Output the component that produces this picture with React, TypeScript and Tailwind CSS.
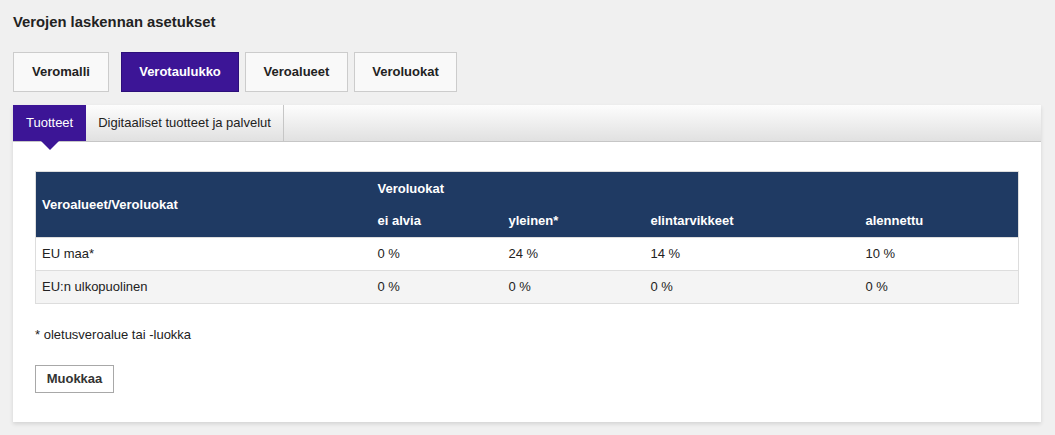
import { useState } from "react";

const mainTabs = [
  { label: "Veromalli", w: "w-[96px]" },
  { label: "Verotaulukko", w: "ml-[6px] w-[118px]" },
  { label: "Veroalueet", w: "w-[103px]" },
  { label: "Veroluokat", w: "w-[103px]" },
];
const subTabs = ["Tuotteet", "Digitaaliset tuotteet ja palvelut"];

const classes = ["ei alvia", "yleinen*", "elintarvikkeet", "alennettu"];

const rows = [
  { area: "EU maa*", rates: ["0 %", "24 %", "14 %", "10 %"] },
  { area: "EU:n ulkopuolinen", rates: ["0 %", "0 %", "0 %", "0 %"] },
];

export default function App() {
  const [mainTab, setMainTab] = useState(1);
  const [subTab, setSubTab] = useState(0);

  return (
    <div className="min-h-[435px] bg-[#f0f0f0] pl-[13px] pr-[14px] pt-[14px] font-['Liberation_Sans',Arial,sans-serif] text-[#222]">
      <h1 className="text-[14.8px] font-bold leading-[17px] text-[#222]">
        Verojen laskennan asetukset
      </h1>

      {/* main tabs */}
      <div className="mt-[21px] flex gap-[6px]">
        {mainTabs.map((t, i) => (
          <button
            key={t.label}
            type="button"
            onClick={() => setMainTab(i)}
            className={
              (i === mainTab
                ? "h-[40px] border border-[#2c0f7a] bg-[#3c1596] text-[13px] font-bold text-white "
                : "h-[40px] border border-[#cccccc] bg-[#f9f9f9] text-[13px] font-bold text-[#222] ") + t.w
            }
          >
            {t.label}
          </button>
        ))}
      </div>

      {/* panel */}
      <div className="mt-[13px] bg-white pb-[29px] shadow-[0_2px_4px_rgba(0,0,0,0.12)]">
        <div className="flex h-[37px] border-b border-[#c6c6c6] bg-gradient-to-b from-[#fdfdfd] to-[#e1e1e1]">
          {subTabs.map((t, i) => (
            <button
              key={t}
              type="button"
              onClick={() => setSubTab(i)}
              className={
                i === subTab
                  ? "relative h-[36px] bg-[#3c1596] px-[13px] text-[13px] text-white"
                  : "h-[36px] border-r border-[#c6c6c6] px-[12px] text-[13px] text-[#222]"
              }
            >
              {t}
              {i === subTab && (
                <span className="absolute left-1/2 top-full -ml-[9px] h-0 w-0 border-x-[9px] border-t-[9px] border-x-transparent border-t-[#3c1596]" />
              )}
            </button>
          ))}
        </div>

        <div className="px-[22px] pt-[29px]">
          <table className="w-full border-collapse border border-[#dddddd] text-left text-[13px]">
            <colgroup>
              <col className="w-[336px]" />
              <col className="w-[131px]" />
              <col className="w-[142px]" />
              <col className="w-[215px]" />
              <col />
            </colgroup>
            <thead className="bg-[#1f3a63] text-white">
              <tr className="h-[33px]">
                <th rowSpan={2} className="px-[6px] font-bold">
                  Veroalueet/Veroluokat
                </th>
                <th colSpan={4} className="px-[6px] font-bold">
                  Veroluokat
                </th>
              </tr>
              <tr className="h-[33px]">
                {classes.map(c => (
                  <th key={c} className="px-[6px] font-bold">
                    {c}
                  </th>
                ))}
              </tr>
            </thead>
            <tbody>
              {rows.map((r, i) => (
                <tr
                  key={r.area}
                  className={
                    i % 2
                      ? "h-[33px] border-t border-[#dddddd] bg-[#f4f4f4]"
                      : "h-[33px] border-t border-[#dddddd] bg-white"
                  }
                >
                  <td className="px-[6px]">{r.area}</td>
                  {r.rates.map((v, j) => (
                    <td key={j} className="px-[6px]">
                      {v}
                    </td>
                  ))}
                </tr>
              ))}
            </tbody>
          </table>

          <p className="mt-[23px] text-[13px] leading-[15px]">
            * oletusveroalue tai -luokka
          </p>

          <button
            type="button"
            className="mt-[23px] h-[28px] w-[79px] border border-[#a8a8a8] bg-white text-[13px] font-bold text-[#333]"
          >
            Muokkaa
          </button>
        </div>
      </div>
    </div>
  );
}
